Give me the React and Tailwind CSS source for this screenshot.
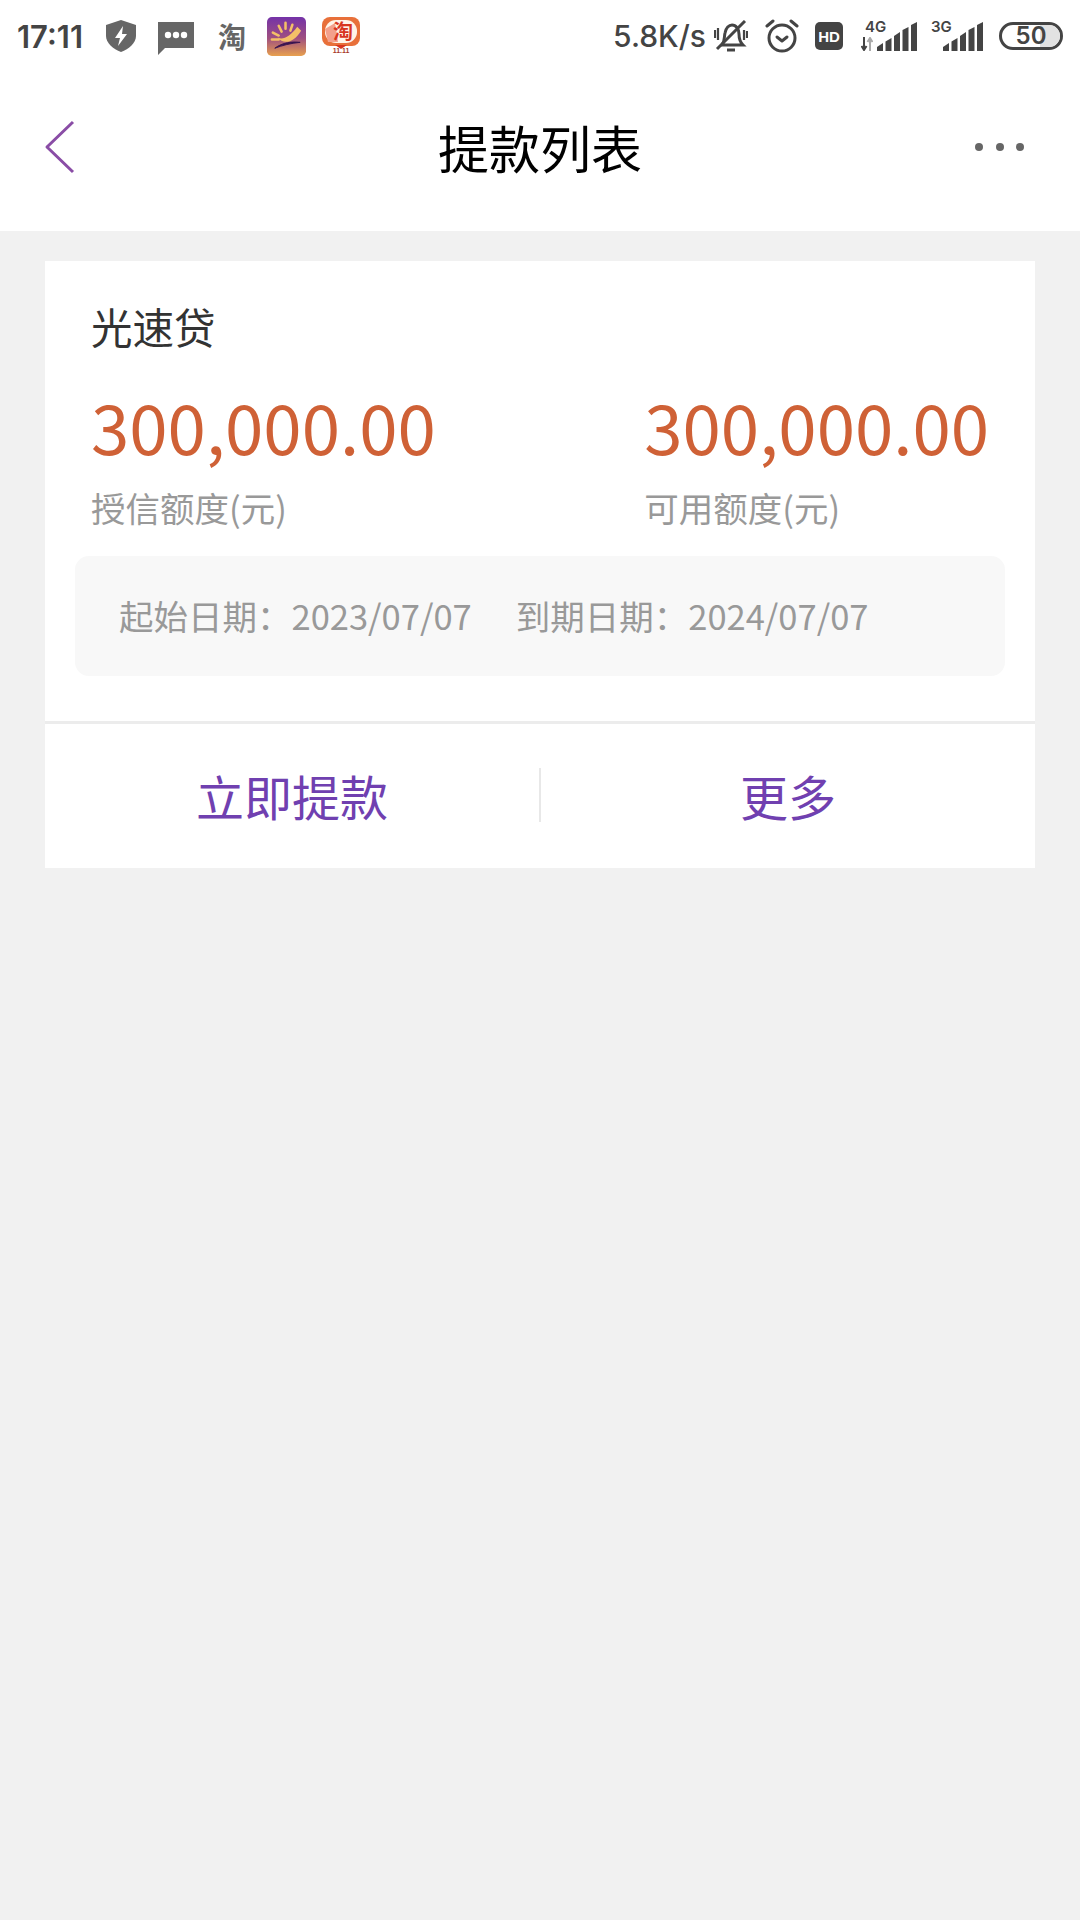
const font = { fontFamily: '"Noto Sans CJK SC", "Noto Sans", sans-serif' };
const statusFont = { fontFamily: 'Inter, sans-serif' };

const ShieldIcon = () => (
  <svg width="30" height="32" viewBox="0 0 30 32">
    <path d="M15 0 L30 5 V16 C30 23 23 29 15 32 C7 29 0 23 0 16 V5 Z" fill="#666" />
    <path d="M17 6 L9 18 H14 L12 26 L21 14 H16 Z" fill="#fff" />
  </svg>
);

const ChatIcon = () => (
  <svg width="36" height="33" viewBox="0 0 36 33">
    <path d="M0 0 H36 V26 H7 L0 33 Z" fill="#666" />
    <circle cx="10" cy="13" r="3.2" fill="#fff" />
    <circle cx="18" cy="13" r="3.2" fill="#fff" />
    <circle cx="26" cy="13" r="3.2" fill="#fff" />
  </svg>
);

const SunLogo = () => (
  <svg width="39" height="39" viewBox="0 0 40 40">
    <defs>
      <linearGradient id="sunBg" x1="0" y1="0" x2="0" y2="1">
        <stop offset="0" stopColor="#7432a8" />
        <stop offset="0.55" stopColor="#a0507f" />
        <stop offset="1" stopColor="#e8a04e" />
      </linearGradient>
    </defs>
    <rect width="40" height="40" rx="5" fill="url(#sunBg)" />
    <path d="M19 6v6M12 9l3 6M26 8l-2 6M6 16l6 3M5 23h7" stroke="#f4c067" strokeWidth="2.6" strokeLinecap="round" />
    <path d="M11 21 C16 24 24 20 31 10 L35 14 C28 26 17 29 11 21 Z" fill="#f4c067" />
    <path d="M8 32 C16 26 26 25 34 26 C24 27 16 29 8 32 Z" fill="#3a1450" stroke="#3a1450" />
  </svg>
);

const TaobaoLogo = () => (
  <svg width="38" height="38" viewBox="0 0 38 38">
    <rect x="0" y="0" width="38" height="29" rx="8" fill="#e8703a" />
    <rect x="3" y="3" width="32" height="23" rx="11" fill="#fff3e8" />
    <path d="M3 12 L13 6 L16 25 L6 25 Z" fill="#f3a08c" />
    <text x="21" y="22" textAnchor="middle" fontSize="20" fontWeight="700" fill="#d8351f" style={font}>淘</text>
    <path d="M13 28 H25 L19 32 Z" fill="#d8351f" />
    <text x="19" y="36" textAnchor="middle" fontSize="7" fontWeight="700" fill="#a83a2a" style={{ fontFamily: '"Liberation Sans", sans-serif' }}>11.11</text>
  </svg>
);

const MuteBell = () => (
  <svg width="34" height="33" viewBox="0 0 34 33" fill="none" stroke="#444" strokeWidth="3">
    <path d="M8 25 C11 21 10 17 11 13 C12 8 15 5 18 5 C22 5 25 9 25 14 C25 19 26 22 29 25 Z" />
    <path d="M13 30 H21" />
    <path d="M3 29 L31 1" />
    <path d="M1 10v8M4 8v12M30 10v10M33 11v7" strokeWidth="2.2" />
  </svg>
);

const AlarmIcon = () => (
  <svg width="34" height="34" viewBox="0 0 34 34" fill="none" stroke="#444" strokeWidth="3" strokeLinecap="round" strokeLinejoin="round">
    <circle cx="17" cy="19" r="13" />
    <path d="M12 18 L17 22 L22 18" />
    <path d="M2 7 L8 2M32 7 L26 2" />
  </svg>
);

const HdIcon = () => (
  <div className="flex h-[28px] w-[28px] items-center justify-center rounded-[5px] bg-[#444]">
    <span className="text-[15px] font-bold leading-none text-white" style={{ fontFamily: '"Liberation Sans", sans-serif' }}>HD</span>
  </div>
);

const SignalBars = () => (
  <svg width="40" height="29" viewBox="0 0 40 29" fill="#444">
    <path d="M0 29 V25 L6 21 V29 Z" />
    <path d="M8.5 29 V19.5 L14.5 16 V29 Z" />
    <path d="M17 29 V14 L23 10 V29 Z" />
    <path d="M25.5 29 V8 L31.5 5 V29 Z" />
    <path d="M34 29 V3 L40 0 V29 Z" />
  </svg>
);

const FourG = () => (
  <div className="relative h-[30px] w-[56px]">
    <span className="absolute left-[4px] top-[-2px] text-[15px] font-semibold leading-none text-[#444]" style={statusFont}>4G</span>
    <svg className="absolute bottom-0 left-0" width="12" height="14" viewBox="0 0 12 14" fill="none" strokeWidth="2">
      <path d="M3 0 V12 M0.5 9 L3 13 L5.5 9" stroke="#444" />
      <path d="M9 14 V2 M6.5 5 L9 1 L11.5 5" stroke="#aaa" />
    </svg>
    <div className="absolute bottom-0 right-0 flex">
      <SignalBars />
    </div>
  </div>
);

const ThreeG = () => (
  <div className="relative h-[30px] w-[52px]">
    <span className="absolute left-0 top-[-2px] text-[15px] font-semibold leading-none text-[#444]" style={statusFont}>3G</span>
    <div className="absolute bottom-0 right-0 flex">
      <SignalBars />
    </div>
  </div>
);

const Battery = () => (
  <div className="relative flex h-[28px] w-[64px] items-center justify-center overflow-hidden rounded-full border-[3px] border-[#444]">
    <div className="absolute bottom-0 right-0 top-0 w-[20px] bg-[#e2e2e2]" />
    <span className="relative text-[24px] font-semibold leading-none text-[#444]" style={statusFont}>50</span>
  </div>
);

const StatusBar = () => (
  <div className="flex h-[72px] items-center justify-between pl-[17px] pr-[17px]">
    <div className="flex items-center">
      <span className="w-[67px] text-[31px] font-semibold leading-none text-[#444]" style={statusFont}>17:11</span>
      <div className="ml-[22px] flex"><ShieldIcon /></div>
      <div className="ml-[22px] mt-[4px] flex"><ChatIcon /></div>
      <span className="ml-[24px] text-[28px] font-bold leading-none text-[#666]" style={font}>淘</span>
      <div className="ml-[21px] flex"><SunLogo /></div>
      <div className="ml-[16px] flex"><TaobaoLogo /></div>
    </div>
    <div className="flex items-center">
      <span className="text-[30px] font-medium leading-none text-[#444]" style={statusFont}>5.8K/s</span>
      <div className="ml-[8px] flex"><MuteBell /></div>
      <div className="ml-[17px] flex"><AlarmIcon /></div>
      <div className="ml-[16px] flex"><HdIcon /></div>
      <div className="ml-[18px] flex"><FourG /></div>
      <div className="ml-[14px] flex"><ThreeG /></div>
      <div className="ml-[16px] flex"><Battery /></div>
    </div>
  </div>
);

const Header = () => (
  <div className="grid h-[159px] grid-cols-[1fr_auto_1fr] items-center bg-white pb-[9px] px-[56px]">
    <svg className="-ml-[12px]" width="32" height="54" viewBox="0 0 32 54" fill="none" stroke="#8a4da6" strokeWidth="3" strokeLinejoin="round">
      <path d="M29 2 L3 27 L29 52" />
    </svg>
    <h1 className="text-[51px] font-normal leading-[62px] text-black" style={font}>提款列表</h1>
    <div className="flex gap-[12.5px] justify-self-end">
      <div className="h-[8px] w-[8px] rounded-full bg-[#666]" />
      <div className="h-[8px] w-[8px] rounded-full bg-[#666]" />
      <div className="h-[8px] w-[8px] rounded-full bg-[#666]" />
    </div>
  </div>
);

const Amount = ({ value, label }) => (
  <div>
    <div className="text-[69px] leading-[80px] text-[#cf6136]" style={font}>{value}</div>
    <div className="mt-[19px] text-[34.5px] leading-[46px] text-[#999]" style={font}>{label}</div>
  </div>
);

const CreditCard = () => (
  <div className="mx-[45px] mt-[30px] bg-white">
    <div className="px-[46px] pt-[40px]">
      <div className="text-[41.5px] leading-[50px] text-[#333]" style={font}>光速贷</div>
      <div className="mt-[34px] flex justify-between">
        <Amount value="300,000.00" label="授信额度(元)" />
        <Amount value="300,000.00" label="可用额度(元)" />
      </div>
    </div>
    <div className="mx-[30px] mt-[26px] flex h-[120px] items-center gap-[44px] rounded-[14px] bg-[#f8f8f8] pl-[44px] text-[34.5px] text-[#999]" style={font}>
      <span>起始日期：2023/07/07</span>
      <span>到期日期：2024/07/07</span>
    </div>
    <div className="mt-[45px] h-[3px] bg-[#ececec]" />
    <div className="flex h-[144px] items-center pb-[2px] text-[48px] text-[#7040b0]" style={font}>
      <div className="flex-1 text-center">立即提款</div>
      <div className="h-[54px] w-[2px] bg-[#e8e8e8]" />
      <div className="flex-1 text-center">更多</div>
    </div>
  </div>
);

export default function App() {
  return (
    <div className="min-h-[1920px] bg-[#f1f1f1]">
      <div className="bg-white">
        <StatusBar />
        <Header />
      </div>
      <CreditCard />
    </div>
  );
}
